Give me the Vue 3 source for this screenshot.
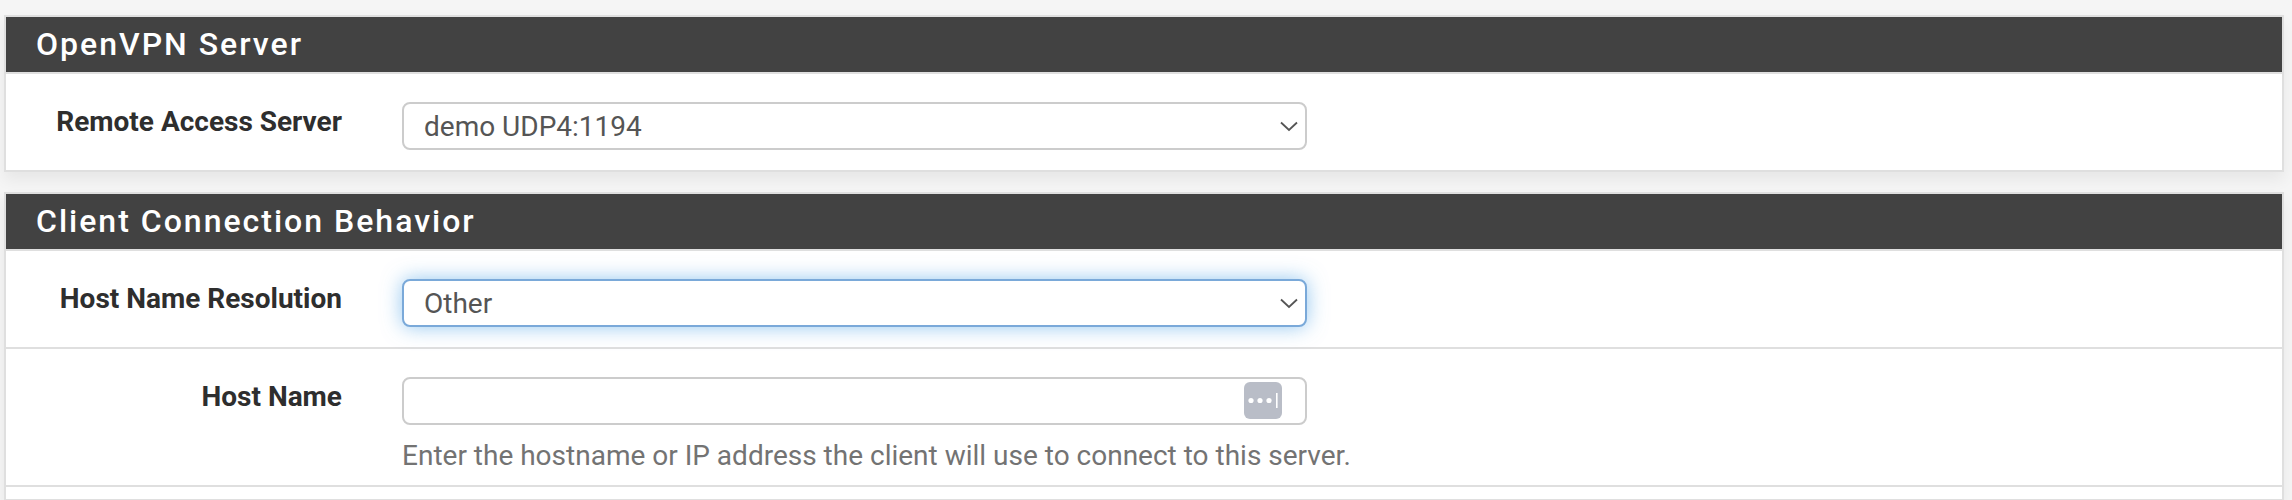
<script setup>
const panels = [
  {
    title: 'OpenVPN Server',
    rows: [{ label: 'Remote Access Server', type: 'select', value: 'demo UDP4:1194' }]
  },
  {
    title: 'Client Connection Behavior',
    rows: [
      { label: 'Host Name Resolution', type: 'select', value: 'Other', focus: true },
      {
        label: 'Host Name',
        type: 'input',
        help: 'Enter the hostname or IP address the client will use to connect to this server.'
      },
      { type: 'empty' }
    ]
  }
]
</script>

<template>
  <div class="page">
    <section v-for="panel in panels" :key="panel.title" class="panel">
      <h2 class="title">{{ panel.title }}</h2>
      <div
        v-for="(row, i) in panel.rows"
        :key="i"
        class="row"
        :class="{ 'row-empty': row.type === 'empty', 'row-help': row.help }"
      >
        <template v-if="row.type !== 'empty'">
          <label class="label">{{ row.label }}</label>
          <div class="field">
            <div class="control" :class="{ focus: row.focus }">
              <span v-if="row.type === 'select'" class="value">{{ row.value }}</span>
              <svg v-if="row.type === 'select'" class="chevron" viewBox="0 0 18 11">
                <path d="M1 1.5 L9 9 L17 1.5" fill="none" stroke="#555" stroke-width="1.8" />
              </svg>
              <span v-else class="keys">
                <svg viewBox="0 0 38 37" width="38" height="37">
                  <rect width="38" height="37" rx="6" fill="#b9bdc7" />
                  <circle cx="7" cy="18.5" r="2.6" fill="#fff" />
                  <circle cx="16" cy="18.5" r="2.6" fill="#fff" />
                  <circle cx="25" cy="18.5" r="2.6" fill="#fff" />
                  <rect x="32" y="11" width="1.6" height="15" fill="#fff" />
                </svg>
              </span>
            </div>
            <p v-if="row.help" class="help">{{ row.help }}</p>
          </div>
        </template>
      </div>
    </section>
  </div>
</template>

<style>
html, body {
  margin: 0;
  overflow: hidden;
}
</style>

<style scoped>
.page {
  height: 500px;
  box-sizing: border-box;
  overflow: hidden;
  background: #f5f5f5;
  padding: 15px 8px 0 4px;
  font-family: Roboto, "Liberation Sans", sans-serif;
  display: flex;
  flex-direction: column;
  gap: 20px;
}
.panel {
  background: #fff;
  border: 2px solid #dfdfdf;
  box-shadow: 0 8px 14px rgba(0, 0, 0, 0.06);
  flex: none;
}
.title {
  margin: 0;
  height: 55px;
  box-sizing: border-box;
  padding: 0 0 0 30px;
  background: #424242;
  color: #fff;
  font-size: 32px;
  font-weight: 500;
  letter-spacing: 2px;
  line-height: 55px;
}
.row {
  display: grid;
  grid-template-columns: 336px 905px;
  column-gap: 60px;
  padding: 28px 0 20px;
  border-top: 2px solid #dfdfdf;
}
.row-help {
  padding-bottom: 0;
  height: 138px;
  box-sizing: border-box;
}
.row-empty {
  display: block;
  height: 12px;
  padding: 0;
}
.label {
  text-align: right;
  font-size: 28px;
  font-weight: 700;
  color: #2e2e2e;
  line-height: 36px;
  margin-top: 2px;
}
.control {
  height: 48px;
  box-sizing: border-box;
  border: 2px solid #ccc;
  border-radius: 8px;
  display: flex;
  align-items: center;
  justify-content: space-between;
  padding: 0 7px 0 20px;
  background: #fff;
}
.control.focus {
  border-color: #7aa9d9;
  box-shadow: 0 0 20px rgba(102, 175, 233, 0.7);
}
.value {
  font-size: 28px;
  color: #555;
}
.chevron {
  width: 18px;
  height: 11px;
}
.keys {
  display: flex;
  margin: -1px 16px 0 auto;
}
.help {
  margin: 13px 0 0;
  font-size: 28px;
  line-height: 36px;
  color: #737373;
  white-space: nowrap;
}
</style>
